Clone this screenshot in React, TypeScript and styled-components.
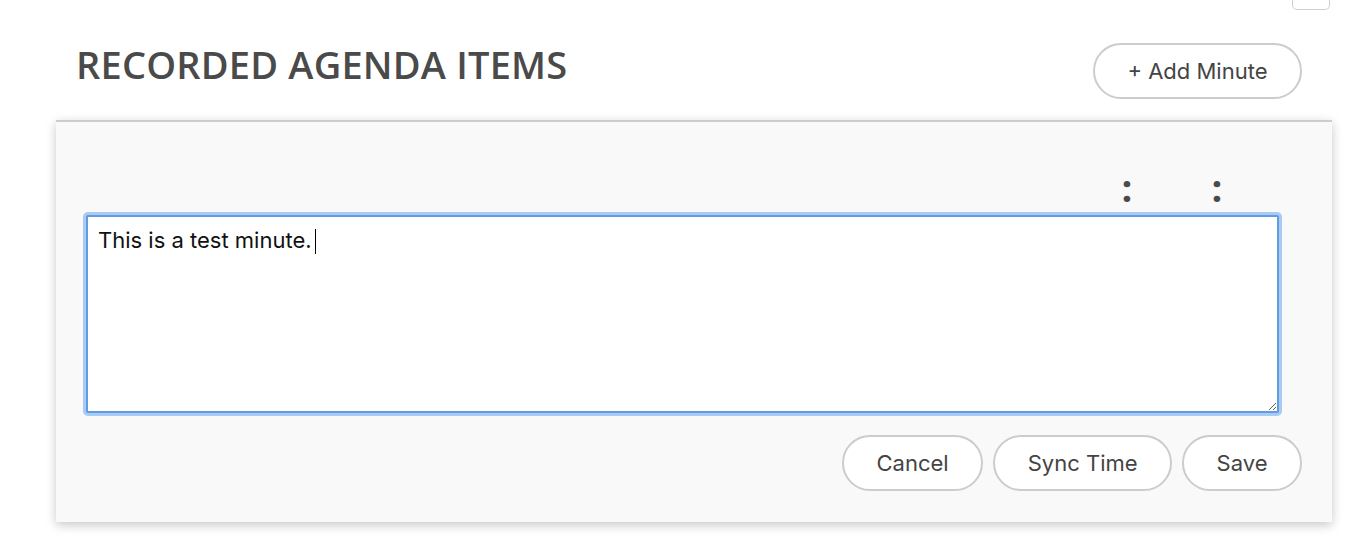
import styled, { createGlobalStyle } from "styled-components";

const GlobalStyle = createGlobalStyle`
  html, body {
    margin: 0;
    padding: 0;
    background: #ffffff;
  }
  body {
    font-family: Inter, "Liberation Sans", Arial, sans-serif;
    color: #444444;
  }
`;

const Page = styled.div`
  width: 1364px;
  height: 552px;
  overflow: hidden;
`;

const TopStrip = styled.div`
  display: flex;
  justify-content: flex-end;
  height: 10px;
  padding-right: 34px;
`;

const CornerTab = styled.div`
  width: 36px;
  height: 9px;
  border: 1px solid #cfcfcf;
  border-top: none;
  border-radius: 0 0 5px 5px;
  background: #ffffff;
`;

const Header = styled.div`
  display: flex;
  justify-content: space-between;
  align-items: flex-start;
  margin: 31px 62px 0 76px;
`;

const Title = styled.h2`
  margin: 0;
  font-family: "Open Sans", "Liberation Sans", sans-serif;
  font-weight: 600;
  font-size: 38px;
  line-height: 46px;
  color: #4a4a4a;
  letter-spacing: 0.2px;
`;

const PillButton = styled.button<{ $top?: number }>`
  height: 56px;
  padding: 0 32.5px;
  margin-top: ${(p) => p.$top ?? 0}px;
  border: 2px solid #cccccc;
  border-radius: 28px;
  background: #ffffff;
  font-family: Inter, "Liberation Sans", Arial, sans-serif;
  font-size: 22px;
  color: #444444;
  cursor: pointer;
  white-space: nowrap;
`;

const Card = styled.section`
  margin: 21px 32px 0 56px;
  padding: 45px 30px 31px 30px;
  background: #f9f9f9;
  border-top: 2px solid #cdcdcd;
  box-shadow: 0 3px 10px rgba(0, 0, 0, 0.22);
`;

const TimeRow = styled.div`
  display: flex;
  justify-content: flex-end;
  align-items: flex-start;
  width: 1193px;
  height: 48px;
`;

const TimeField = styled.input<{ $w: number }>`
  width: ${(p) => p.$w}px;
  height: 40px;
  border: none;
  background: transparent;
  padding: 0;
  outline: none;
`;

const Colon = styled.span`
  width: 12px;
  text-align: center;
  font-family: "Open Sans", "Liberation Sans", sans-serif;
  font-weight: 700;
  font-size: 38px;
  line-height: 40px;
  color: #4a4a4a;
`;

const Editor = styled.div`
  position: relative;
  width: 1193px;
`;

const MinuteText = styled.textarea`
  display: block;
  box-sizing: border-box;
  width: 1193px;
  height: 198px;
  margin: 0;
  padding: 10px 10px;
  border: 2px solid #5f9ce2;
  border-radius: 2px;
  box-shadow: 0 0 0 3px #a9cbf3;
  background: #ffffff;
  font-family: Inter, "Liberation Sans", Arial, sans-serif;
  font-size: 22px;
  line-height: 26px;
  color: #111111;
  outline: none;
  resize: both;
`;

const Caret = styled.span`
  position: absolute;
  left: 229px;
  top: 14px;
  width: 1px;
  height: 25px;
  background: #000000;
  pointer-events: none;
`;

const Actions = styled.div`
  display: flex;
  justify-content: flex-end;
  gap: 10px;
  margin-top: 22px;
`;

export default function App() {
  return (
    <Page>
      <GlobalStyle />
      <TopStrip>
        <CornerTab />
      </TopStrip>
      <Header>
        <Title>RECORDED AGENDA ITEMS</Title>
        <PillButton $top={2}>+ Add Minute</PillButton>
      </Header>
      <Card>
        <TimeRow>
          <TimeField $w={78} />
          <Colon>:</Colon>
          <TimeField $w={78} />
          <Colon>:</Colon>
          <TimeField $w={56} />
        </TimeRow>
        <Editor>
          <MinuteText defaultValue="This is a test minute." />
          <Caret />
        </Editor>
        <Actions>
          <PillButton>Cancel</PillButton>
          <PillButton>Sync Time</PillButton>
          <PillButton>Save</PillButton>
        </Actions>
      </Card>
    </Page>
  );
}
